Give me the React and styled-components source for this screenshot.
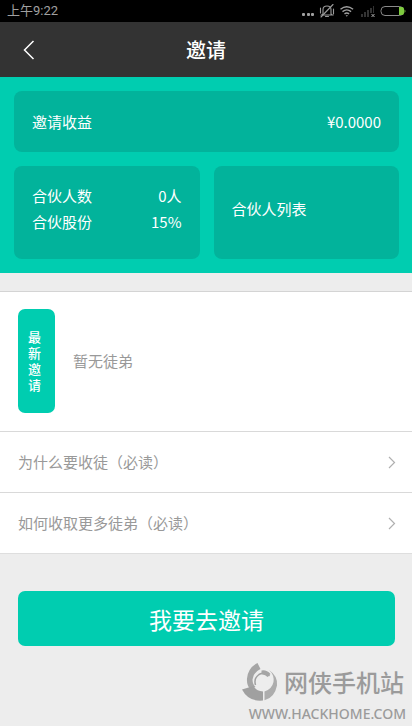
import React from "react";
import styled, { createGlobalStyle } from "styled-components";

const GlobalStyle = createGlobalStyle`
  * {
    box-sizing: border-box;
  }
  body {
    margin: 0;
    background: #ededed;
    font-family: "Noto Sans CJK SC", "Noto Sans", sans-serif;
    font-size: 15px;
    line-height: 26px;
  }
  button {
    font-family: inherit;
    border: none;
    cursor: pointer;
  }
  a {
    color: inherit;
    text-decoration: none;
  }
`;

const StatusBar = styled.div`
  display: flex;
  align-items: center;
  justify-content: space-between;
  height: 22px;
  padding: 0 5px 0 7px;
  background: #000;
  color: #a0a0a0;
  font-family: Roboto, "Noto Sans CJK SC", sans-serif;
  font-size: 13px;
  line-height: 20px;
`;

const StatusIcons = styled.div`
  display: flex;
  align-items: center;

  svg {
    display: block;
  }
`;

const Header = styled.header`
  display: grid;
  grid-template-columns: 58px 1fr 58px;
  align-items: center;
  height: 55px;
  background: #333;
  color: #fff;
`;

const BackButton = styled.button`
  display: flex;
  align-items: center;
  justify-content: center;
  height: 55px;
  padding: 0;
  background: none;
  color: inherit;
`;

const Title = styled.h1`
  margin: 0;
  font-size: 20px;
  font-weight: 500;
  text-align: center;
`;

const Summary = styled.section`
  display: grid;
  grid-template-columns: 1fr 1fr;
  gap: 14px;
  padding: 14px 13px 14px 14px;
  background: #00cdb0;
  color: #fff;
`;

const Card = styled.div`
  display: flex;
  flex-direction: column;
  justify-content: center;
  grid-column: ${({ $wide }) => ($wide ? "1 / -1" : "auto")};
  min-height: ${({ $wide }) => ($wide ? "61px" : "93px")};
  padding: ${({ $wide }) => ($wide ? "0 18px" : "0 18px 8px")};
  border-radius: 8px;
  background: #02b39b;
`;

const Stat = styled.div`
  display: flex;
  justify-content: space-between;
`;

const Panel = styled.section`
  margin-top: 18px;
  border-top: 1px solid #d4d4d4;
  background: #fff;
`;

const Latest = styled.div`
  display: flex;
  align-items: center;
  gap: 18px;
  padding: 17px 18px 18px;
  color: #999;
`;

const Badge = styled.h2`
  display: flex;
  align-items: center;
  width: 37px;
  height: 104px;
  margin: 0;
  padding: 0 14px 0 10px;
  border-radius: 7px;
  background: #00cdb0;
  color: #fff;
  font-size: 13px;
  font-weight: 500;
  line-height: 16px;
`;

const LinkRow = styled.a`
  display: flex;
  align-items: center;
  justify-content: space-between;
  height: 61px;
  padding: 0 16px 0 18px;
  border-top: 1px solid #d9d9d9;
  color: #999;

  &:last-child {
    height: 62px;
    border-bottom: 1px solid #dedede;
  }
`;

const Action = styled.div`
  padding: 37px 17px 0 18px;
`;

const InviteButton = styled.button`
  display: block;
  width: 100%;
  height: 55px;
  padding: 0;
  border-radius: 7px;
  background: #00cdb0;
  color: #fff;
  font-size: 23px;
  line-height: 32px;
`;

const Footer = styled.footer`
  display: flex;
  flex-direction: column;
  align-items: flex-end;
  padding: 17px 6px 0 0;
  color: #9b9b9b;
`;

const Brand = styled.div`
  display: flex;
  align-items: center;
  gap: 6px;
  padding-right: 2px;
  font-size: 24px;
  font-weight: 500;
  line-height: 38px;
`;

const Site = styled.div`
  font-family: "Noto Sans", sans-serif;
  font-size: 14px;
  font-weight: 500;
  line-height: 26px;
`;

const DeviceIcons = () => (
  <StatusIcons>
    <svg width="106" height="16" viewBox="0 0 106 16" fill="none" aria-hidden="true">
      <g fill="#a0a0a0">
        <rect x="1" y="10" width="3" height="3" rx="1" />
        <rect x="6" y="10" width="3" height="3" rx="1" />
        <rect x="10" y="10" width="3" height="3" rx="1" />
      </g>
      {/* muted bell */}
      <g stroke="#9a9a9a" strokeWidth="1.1" strokeLinecap="round">
        <path d="M22 11V6.500q0-3.500 4-3.500t4 3.500V11l1.300 1H20.700z" />
        <path d="M24.500 13.500h3M20 14 32 1.500M19.500 5v5M32.500 6v5" />
      </g>
      {/* wifi */}
      <g stroke="#a0a0a0" strokeWidth="1.4">
        <path d="M39.500 6.200q6.200-5 12.600 0M41.500 8.600q4.300-3.400 8.600 0M43.500 10.900q2.300-1.700 4.600 0" />
        <path d="M44.600 12.200h2.400l-1.200 1.600z" fill="#a0a0a0" stroke="none" />
      </g>
      {/* no signal */}
      <g fill="#333">
        <rect x="60" y="11" width="2" height="3" />
        <rect x="63" y="9" width="2" height="5" />
        <rect x="66" y="7" width="2" height="7" />
        <rect x="69" y="5" width="2" height="5" />
        <rect x="72" y="3" width="1" height="7" />
      </g>
      <path d="m70.500 11 3 3m0-3-3 3" stroke="#aaa" />
      {/* battery */}
      <rect x="80" y="3.500" width="22.500" height="9" rx="4" stroke="#8a8a8a" />
      <path d="M98 4h3q2 0 2 2v4q0 2-2 2h-3z" fill="#7ecb3f" />
      <path d="M103.500 6.500q2 1.500 0 3.500z" fill="#7ecb3f" />
    </svg>
  </StatusIcons>
);

const Chevron = () => (
  <svg width="8" height="13" viewBox="0 0 8 13" fill="none" aria-hidden="true">
    <path d="m1 1 5.500 5.500L1 12" stroke="#b0b0b0" strokeWidth="1.200" />
  </svg>
);

const Logo = () => (
  <svg width="36" height="38" viewBox="0 0 36 38" aria-hidden="true">
    <path d="M15.500 0 18.500 6Q11 9.500 10.500 16.500 10.500 21 13.500 24L8 26Q4.500 22 5 15.500 6 5 15.500 0z" fill="#a5a5a5" />
    <path d="M0 26.500 11.500 23Q14.500 28.500 21 28.500V37.500Q6.500 39 0 26.500z" fill="#a0a0a0" />
    <path d="M22.500 28.500Q30 26 31.500 19 32.500 12 27 7 36 13 35 22.500 32.500 35 22.500 37.200z" fill="#adadad" />
    <path d="M27.500 13Q22.500 8.500 17 11.500 11.500 15.500 13.500 22" fill="none" stroke="#a0a0a0" strokeWidth="1.500" />
    <path d="M19.500 7.500q5-1 9 3.500l-3 3q-2.500-3-6-2.500z" fill="#a5a5a5" />
  </svg>
);

const stats = [
  { label: "合伙人数", value: "0人" },
  { label: "合伙股份", value: "15%" },
];

const links = ["为什么要收徒（必读）", "如何收取更多徒弟（必读）"];

const App = () => {
  return (
    <>
      <GlobalStyle />
      <StatusBar>
        <span>上午9:22</span>
        <DeviceIcons />
      </StatusBar>
      <Header>
        <BackButton aria-label="返回">
          <svg width="12" height="20" viewBox="0 0 12 20" fill="none">
            <path d="M10.500 1 1.500 10l9 9" stroke="currentColor" strokeWidth="1.500" />
          </svg>
        </BackButton>
        <Title>邀请</Title>
      </Header>
      <main>
        <Summary>
          <Card $wide>
            <Stat>
              <span>邀请收益</span>
              <span>¥0.0000</span>
            </Stat>
          </Card>
          <Card>
            {stats.map((stat) => (
              <Stat key={stat.label}>
                <span>{stat.label}</span>
                <span>{stat.value}</span>
              </Stat>
            ))}
          </Card>
          <Card as="a" href="#partners">
            合伙人列表
          </Card>
        </Summary>
        <Panel>
          <Latest>
            <Badge>最新邀请</Badge>
            <span>暂无徒弟</span>
          </Latest>
          {links.map((text) => (
            <LinkRow key={text} href="#help">
              <span>{text}</span>
              <Chevron />
            </LinkRow>
          ))}
        </Panel>
        <Action>
          <InviteButton>我要去邀请</InviteButton>
        </Action>
      </main>
      <Footer>
        <Brand>
          <Logo />
          <span>网侠手机站</span>
        </Brand>
        <Site>WWW.HACKHOME.COM</Site>
      </Footer>
    </>
  );
};

export default App;
